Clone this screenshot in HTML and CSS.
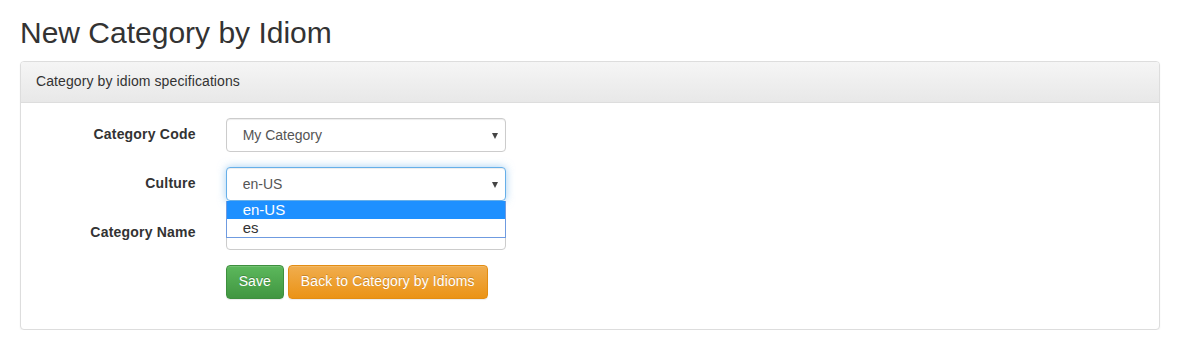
FILE: index.html
```html
<!DOCTYPE html>
<html lang="en">

<head>
    <meta charset="UTF-8">
    <meta name="viewport" content="width=device-width, initial-scale=1.0">
    <title>New Category by Idiom</title>
    <link rel="stylesheet" href="styles.css">
</head>

<body>
    <div class="page">
        <h2>New Category by Idiom</h2>

        <div class="panel">
            <div class="panel-heading">Category by idiom specifications</div>
            <div class="panel-body">
                <form class="form-horizontal">
                    <div class="form-group">
                        <label class="control-label">Category Code</label>
                        <div class="field">
                            <div class="select-wrap">
                                <select class="form-control">
                                    <option>My Category</option>
                                </select>
                            </div>
                        </div>
                    </div>

                    <div class="form-group">
                        <label class="control-label">Culture</label>
                        <div class="field">
                            <div class="select-wrap open">
                                <select class="form-control focused">
                                    <option>en-US</option>
                                    <option>es</option>
                                </select>
                                <!-- open list of the culture select -->
                                <ul class="dropdown-list">
                                    <li class="selected">en-US</li>
                                    <li>es</li>
                                </ul>
                            </div>
                        </div>
                    </div>

                    <div class="form-group">
                        <label class="control-label">Category Name</label>
                        <div class="field">
                            <input class="form-control" type="text">
                        </div>
                    </div>

                    <div class="form-group">
                        <div class="field offset">
                            <button type="button" class="btn btn-success">Save</button>
                            <button type="button" class="btn btn-warning">Back to Category by Idioms</button>
                        </div>
                    </div>
                </form>
            </div>
        </div>
    </div>
</body>

</html>
```

FILE: styles.css
```css
* {
    box-sizing: border-box;
}

body {
    margin: 0;
    font-family: "Liberation Sans", Arial, sans-serif;
    font-size: 14px;
    line-height: 1.42857;
    color: #333;
    background: #fff;
}

.page {
    padding: 0 22px 0 20px;
}

h2 {
    font-size: 30px;
    font-weight: 500;
    line-height: 1.1;
    margin: 16px 0 12px;
}

.panel {
    border: 1px solid #ddd;
    border-radius: 4px;
    background: #fff;
    box-shadow: 0 1px 2px rgba(0, 0, 0, 0.05);
}

.panel-heading {
    padding: 10px 15px;
    border-bottom: 1px solid #ddd;
    border-radius: 3px 3px 0 0;
    background: linear-gradient(to bottom, #f5f5f5 0%, #e8e8e8 100%);
    color: #333;
    letter-spacing: 0.1px;
}

.panel-body {
    padding: 15px;
}

.form-group {
    display: flex;
    margin: 0 -15px 15px;
}

.control-label {
    width: 16.66667%;
    padding: 7px 15px 0;
    text-align: right;
    font-weight: bold;
    letter-spacing: 0.2px;
}

.field {
    padding: 0 15px;
}

.field.offset {
    margin-left: 16.66667%;
}

.form-control {
    display: block;
    width: 280px;
    height: 34px;
    padding: 6px 12px;
    font-family: inherit;
    font-size: 14px;
    color: #555;
    background: #fff;
    border: 1px solid #ccc;
    border-radius: 4px;
    box-shadow: inset 0 1px 1px rgba(0, 0, 0, 0.075);
    outline: none;
}

select.form-control {
    appearance: none;
    -webkit-appearance: none;
    padding-left: 16px;
}

.select-wrap {
    position: relative;
    width: 280px;
}

.select-wrap::after {
    content: "";
    position: absolute;
    right: 8px;
    top: 15px;
    border-left: 3.5px solid transparent;
    border-right: 3.5px solid transparent;
    border-top: 6px solid #444;
    pointer-events: none;
}

.form-control.focused {
    border-color: #66afe9;
    box-shadow: inset 0 1px 1px rgba(0, 0, 0, 0.075), 0 0 8px rgba(102, 175, 233, 0.6);
}

.dropdown-list {
    position: absolute;
    top: 100%;
    left: 0;
    width: 280px;
    margin: 0;
    padding: 0;
    list-style: none;
    background: #fff;
    border: 1px solid #6f9be0;
    border-top: none;
    z-index: 2;
}

.dropdown-list li {
    height: 18px;
    line-height: 18px;
    padding-left: 16px;
    font-size: 15px;
    color: #333;
}

.dropdown-list li.selected {
    background: #1e90ff;
    color: #fff;
}

.btn {
    display: inline-block;
    height: 34px;
    padding: 6px 12px;
    font-family: inherit;
    font-size: 14px;
    line-height: 1.42857;
    color: #fff;
    border: 1px solid transparent;
    border-radius: 4px;
    letter-spacing: 0.1px;
    text-shadow: 0 -1px 0 rgba(0, 0, 0, 0.2);
    box-shadow: inset 0 1px 0 rgba(255, 255, 255, 0.15), 0 1px 1px rgba(0, 0, 0, 0.075);
    cursor: pointer;
}

.btn-success {
    background: linear-gradient(to bottom, #5cb85c 0%, #419641 100%);
    border-color: #3e8f3e;
}

.btn-warning {
    background: linear-gradient(to bottom, #f0ad4e 0%, #eb9316 100%);
    border-color: #e38d13;
}
```
